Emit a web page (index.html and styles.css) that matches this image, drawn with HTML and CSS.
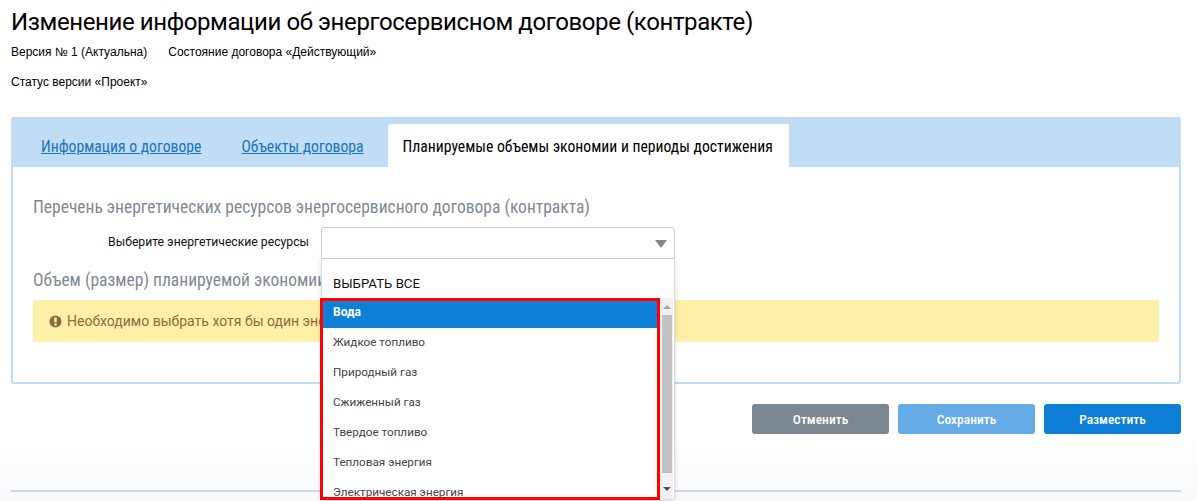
FILE: index.html
```html
<!DOCTYPE html>
<html lang="ru">
<head>
<meta charset="utf-8">
<title>Изменение информации</title>
<link rel="stylesheet" href="styles.css">
</head>
<body>
<div class="page">
  <h1 class="title">Изменение информации об энергосервисном договоре (контракте)</h1>
  <div class="meta meta-first"><span>Версия № 1 (Актуальна)</span><span>Состояние договора «Действующий»</span></div>
  <div class="meta meta-second"><span>Статус версии «Проект»</span></div>

  <section class="panel">
    <nav class="tabs">
      <a class="tab" href="#">Информация о договоре</a>
      <a class="tab" href="#">Объекты договора</a>
      <span class="tab tab-active">Планируемые объемы экономии и периоды достижения</span>
    </nav>
    <div class="panel-body">
      <h2 class="section">Перечень энергетических ресурсов энергосервисного договора (контракта)</h2>
      <div class="field">
        <label class="field-label">Выберите энергетические ресурсы</label>
        <div class="select">
          <div class="select-box"><span class="caret"></span></div>
          <div class="menu">
            <div class="select-all">ВЫБРАТЬ ВСЕ</div>
            <div class="list">
              <ul class="options">
                <li class="option option-active">Вода</li>
                <li class="option">Жидкое топливо</li>
                <li class="option">Природный газ</li>
                <li class="option">Сжиженный газ</li>
                <li class="option">Твердое топливо</li>
                <li class="option">Тепловая энергия</li>
                <li class="option">Электрическая энергия</li>
              </ul>
              <div class="scrollbar">
                <span class="arrow arrow-up"></span>
                <span class="thumb"></span>
                <span class="arrow arrow-down"></span>
              </div>
            </div>
          </div>
          <div class="highlight"></div>
        </div>
      </div>
      <h2 class="section section-second">Объем (размер) планируемой экономии</h2>
      <div class="alert">
        <svg class="alert-icon" viewBox="0 0 14 14" aria-hidden="true"><circle cx="7" cy="7" r="6.5" fill="#8a6d3b"/><rect x="5.7" y="2.8" width="2.6" height="5.2" rx="0.8" fill="#fff0a8"/><circle cx="7" cy="10.2" r="1.4" fill="#fff0a8"/></svg>
        <span>Необходимо выбрать хотя бы один энергетический ресурс</span>
      </div>
    </div>
  </section>

  <div class="actions">
    <button class="btn btn-cancel">Отменить</button>
    <button class="btn btn-save">Сохранить</button>
    <button class="btn btn-publish">Разместить</button>
  </div>
  <div class="footer-line"></div>
</div>
</body>
</html>
```
FILE: styles.css
```css
* { box-sizing: border-box; }
html, body { margin: 0; padding: 0; height: 501px; overflow: hidden; }
body {
  font-family: Roboto, "Liberation Sans", sans-serif;
  background: linear-gradient(to bottom, #fff 0, #fff 440px, #f7f9fb 501px);
  color: #000;
}
.page { padding: 0 16px 0 11px; height: 501px; display: flex; flex-direction: column; }
.title {
  margin: 7px 0 0;
  font-size: 24px;
  line-height: 30px;
  font-weight: 400;
  letter-spacing: -0.4px;
  color: #000;
  white-space: nowrap;
}
.meta { font-family: "Liberation Sans", Arial, sans-serif; font-size: 12px; line-height: 14px; display: flex; gap: 21px; }
.meta-first { margin-top: 8px; }
.meta-second { margin-top: 16px; }
.panel { margin-top: 28px; border: 2px solid #c0ddf5; border-radius: 3px; height: 267px; flex: none; }
.tabs { background: #c0ddf5; height: 48px; display: flex; padding: 5px 0 0 8px; }
.tab { font-family: Roboto, sans-serif; font-stretch: 75%; font-size: 15.7px; line-height: 45px; height: 43px; padding: 0 20px; color: #1a75bb; white-space: nowrap; }
.tab-active { background: #fff; color: #000; border-radius: 3px 3px 0 0; margin-left: 4px; padding: 0 15px; width: 401px; }
.panel-body { padding: 29px 20px 0; position: relative; }
.section { margin: 0; font-family: Roboto, sans-serif; font-stretch: 75%; font-size: 17.5px; line-height: 22px; font-weight: 400; color: #7f8a94; white-space: nowrap; }
.section-second { margin-top: 10px; }
.field { display: flex; align-items: flex-start; margin-top: 9px; height: 32px; }
.field-label { font-family: Roboto, sans-serif; font-size: 12.2px; line-height: 30px; width: 276px; text-align: right; color: #111; white-space: nowrap; }
.select { position: relative; width: 354px; margin-left: 12px; z-index: 2; }
.select-box { height: 32px; border: 1px solid #ccc; border-radius: 3px 3px 0 0; background: #fff; position: relative; }
.caret { position: absolute; right: 7px; top: 12px; width: 0; height: 0; border-left: 6px solid transparent; border-right: 6px solid transparent; border-top: 8px solid #888; }
.menu { position: absolute; top: 32px; left: 0; width: 354px; height: 240px; background: #fff; border-left: 1px solid #ddd; border-right: 1px solid #ddd; box-shadow: 0 2px 5px rgba(0,0,0,.15); overflow: hidden; }
.select-all { height: 39px; padding: 17px 0 0 11px; font-family: Roboto, sans-serif; font-size: 13.2px; line-height: 15px; color: #111; }
.list { display: flex; height: 202px; }
.options { list-style: none; margin: 0; padding: 0; flex: 1; overflow: hidden; }
.option { height: 30px; line-height: 29px; padding-left: 11px; font-family: Roboto, sans-serif; font-size: 11.7px; color: #444; white-space: nowrap; }
.option-active { background: #0e7fd6; color: #fff; font-size: 12px; font-weight: 700; }
.scrollbar { width: 13px; margin-right: 1px; background: #f1f1f1; display: flex; flex-direction: column; align-items: center; }
.thumb { width: 10px; height: 158px; flex: none; background: #c1c1c1; }
.arrow { width: 0; height: 0; flex: none; border-left: 4px solid transparent; border-right: 4px solid transparent; }
.arrow-up { border-bottom: 4px solid #a3a3a3; margin: 7px 0 6px; }
.arrow-down { border-top: 4px solid #505050; margin: auto 0 9px; }
.highlight { position: absolute; left: -1px; top: 71px; width: 340px; height: 202px; border: 3px solid #f00; pointer-events: none; }
.alert { margin-top: 9px; height: 42px; background: #fff0a8; border-radius: 3px; padding-left: 16px; display: flex; align-items: center; gap: 5px; font-family: Roboto, sans-serif; font-size: 14px; color: #8a6d3b; white-space: nowrap; }
.alert-icon { width: 13px; height: 13px; flex: none; }
.actions { display: flex; justify-content: flex-end; gap: 9px; margin-top: 20px; }
.btn { width: 137px; height: 30px; border: 0; border-radius: 3px; color: #fff; font-family: Roboto, sans-serif; font-stretch: 75%; font-size: 13.5px; font-weight: 500; }
.btn-cancel { background: #7a8791; }
.btn-save { background: #65abe6; }
.btn-publish { background: #0e7fd6; }
.footer-line { margin-top: 56px; height: 2px; background: #cbd9e6; flex: none; }
```
